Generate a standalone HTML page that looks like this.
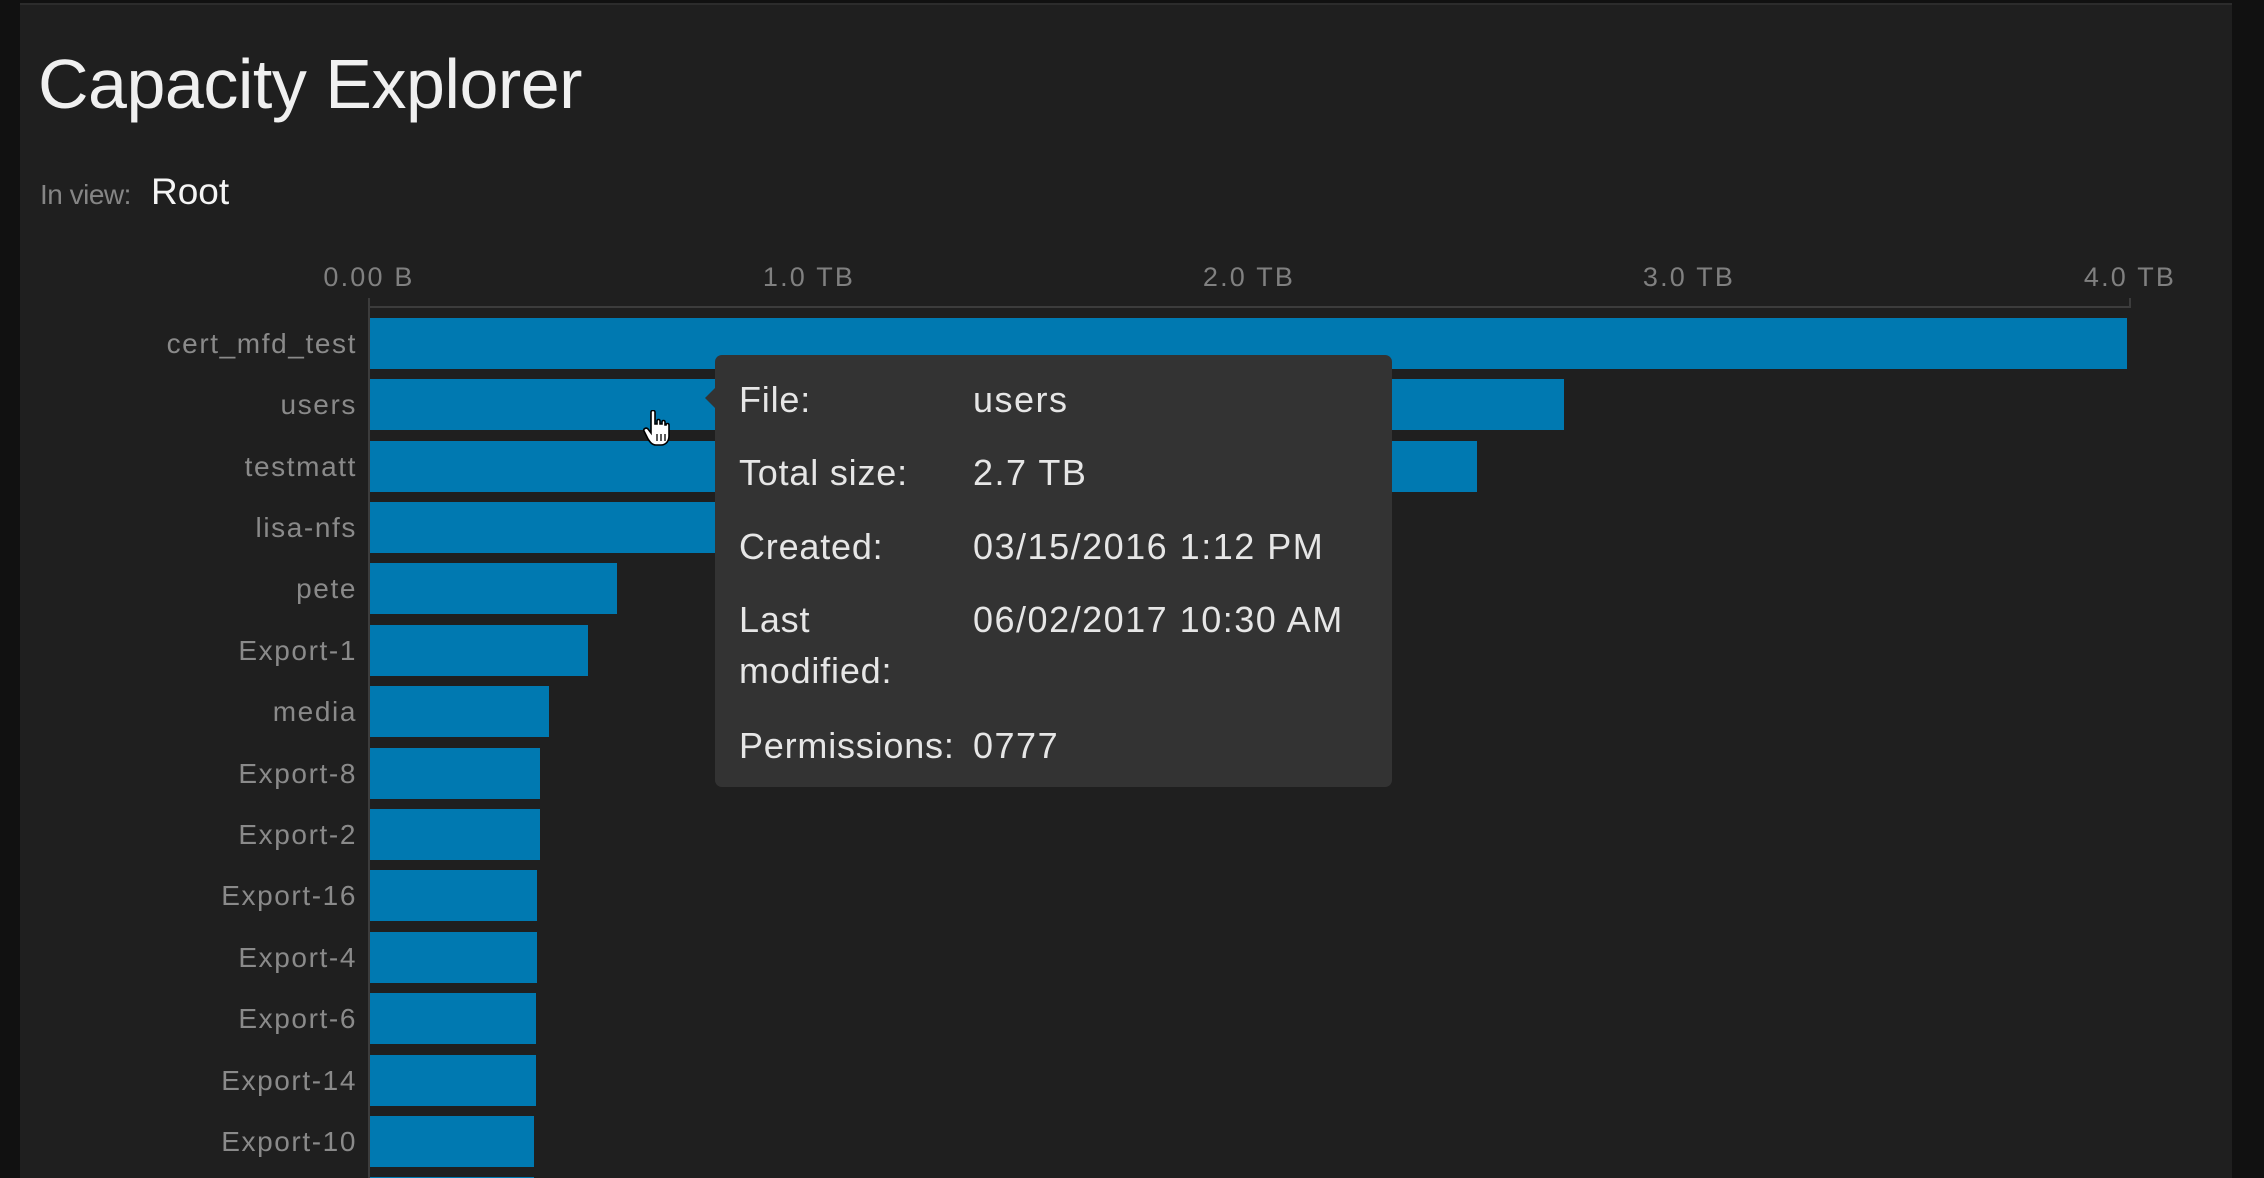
<!DOCTYPE html>
<html><head><meta charset="utf-8"><style>
html,body{margin:0;padding:0;overflow:hidden;height:1178px}
body{width:2264px;background:#111;position:relative;font-family:"Liberation Sans",sans-serif}
#panel{position:absolute;left:20px;top:3px;width:2212px;height:1175px;background:#1f1f1f;border-top:2px solid #2c2c2c}
.a{position:absolute;white-space:nowrap}
.lbl{position:absolute;right:1907px;color:#8a8a8a;font-size:28px;letter-spacing:1.6px;text-align:right}
.bar{position:absolute;left:370px;height:51px;background:#0079b1}
.ax{position:absolute;color:#808080;font-size:27px;top:262px;width:200px;text-align:center;letter-spacing:2.2px}
.tt{position:absolute;color:#e6e6e6;font-size:36px;letter-spacing:0.8px}
.v{letter-spacing:1.5px}
</style></head><body>
<div id="panel"></div>
<div class="a" style="left:38px;top:44px;font-size:70px;color:#f0f0f0;letter-spacing:-0.5px">Capacity Explorer</div>
<div class="a" style="left:40px;top:179px;font-size:28px;color:#858585;letter-spacing:-0.5px">In view:</div>
<div class="a" style="left:151px;top:171px;font-size:37px;color:#f5f5f5">Root</div>

<div class="ax" style="left:269px">0.00 B</div>
<div class="ax" style="left:709px">1.0 TB</div>
<div class="ax" style="left:1149px">2.0 TB</div>
<div class="ax" style="left:1589px">3.0 TB</div>
<div class="ax" style="left:2030px">4.0 TB</div>
<div style="position:absolute;left:369px;top:306px;width:1762px;height:2px;background:#3c3c3c"></div>
<div style="position:absolute;left:2129px;top:298px;width:2px;height:10px;background:#3c3c3c"></div>
<div style="position:absolute;left:368px;top:298px;width:2px;height:880px;background:#3c3c3c"></div>

<div class="lbl" style="top:328px">cert_mfd_test</div><div class="bar" style="top:318px;width:1757px"></div>
<div class="lbl" style="top:389px">users</div><div class="bar" style="top:379px;width:1194px"></div>
<div class="lbl" style="top:451px">testmatt</div><div class="bar" style="top:441px;width:1107px"></div>
<div class="lbl" style="top:512px">lisa-nfs</div><div class="bar" style="top:502px;width:500px"></div>
<div class="lbl" style="top:573px">pete</div><div class="bar" style="top:563px;width:247px"></div>
<div class="lbl" style="top:635px">Export-1</div><div class="bar" style="top:625px;width:218px"></div>
<div class="lbl" style="top:696px">media</div><div class="bar" style="top:686px;width:179px"></div>
<div class="lbl" style="top:758px">Export-8</div><div class="bar" style="top:748px;width:170px"></div>
<div class="lbl" style="top:819px">Export-2</div><div class="bar" style="top:809px;width:170px"></div>
<div class="lbl" style="top:880px">Export-16</div><div class="bar" style="top:870px;width:167px"></div>
<div class="lbl" style="top:942px">Export-4</div><div class="bar" style="top:932px;width:167px"></div>
<div class="lbl" style="top:1003px">Export-6</div><div class="bar" style="top:993px;width:166px"></div>
<div class="lbl" style="top:1065px">Export-14</div><div class="bar" style="top:1055px;width:166px"></div>
<div class="lbl" style="top:1126px">Export-10</div><div class="bar" style="top:1116px;width:164px"></div>
<div class="bar" style="top:1177px;width:164px;height:1px"></div>

<div style="position:absolute;left:715px;top:355px;width:677px;height:432px;background:#333;border-radius:7px"></div>
<div style="position:absolute;left:705px;top:388px;width:0;height:0;border-top:10px solid transparent;border-bottom:10px solid transparent;border-right:10px solid #333"></div>
<div class="tt" style="left:739px;top:379px">File:</div><div class="tt v" style="left:973px;top:379px">users</div>
<div class="tt" style="left:739px;top:452px">Total size:</div><div class="tt v" style="left:973px;top:452px">2.7 TB</div>
<div class="tt" style="left:739px;top:526px">Created:</div><div class="tt v" style="left:973px;top:526px">03/15/2016 1:12 PM</div>
<div class="tt" style="left:739px;top:599px">Last</div><div class="tt v" style="left:973px;top:599px">06/02/2017 10:30 AM</div>
<div class="tt" style="left:739px;top:650px">modified:</div>
<div class="tt" style="left:739px;top:725px">Permissions:</div><div class="tt v" style="left:973px;top:725px">0777</div>

<svg style="position:absolute;left:643px;top:410px" width="30" height="38" viewBox="0 0 30 38">
<path d="M8 2 C8 0 12 0 12 2 L12 14 L14 14 L14 11 C14 9 17 9 17 11 L17 14 L19 14 L19 12 C19 10 22 10 22 12 L22 15 L23 15 C23 13 26 13 26 15 L26 26 C26 31 23 35 18 35 L13 35 C9 35 7 32 5 29 L1 21 C0 19 3 17 5 19 L8 23 Z" fill="#fff" stroke="#000" stroke-width="1.6"/>
<path d="M14 24 V31 M18 24 V31 M22 24 V31" stroke="#000" stroke-width="1.3"/>
</svg>
</body></html>
